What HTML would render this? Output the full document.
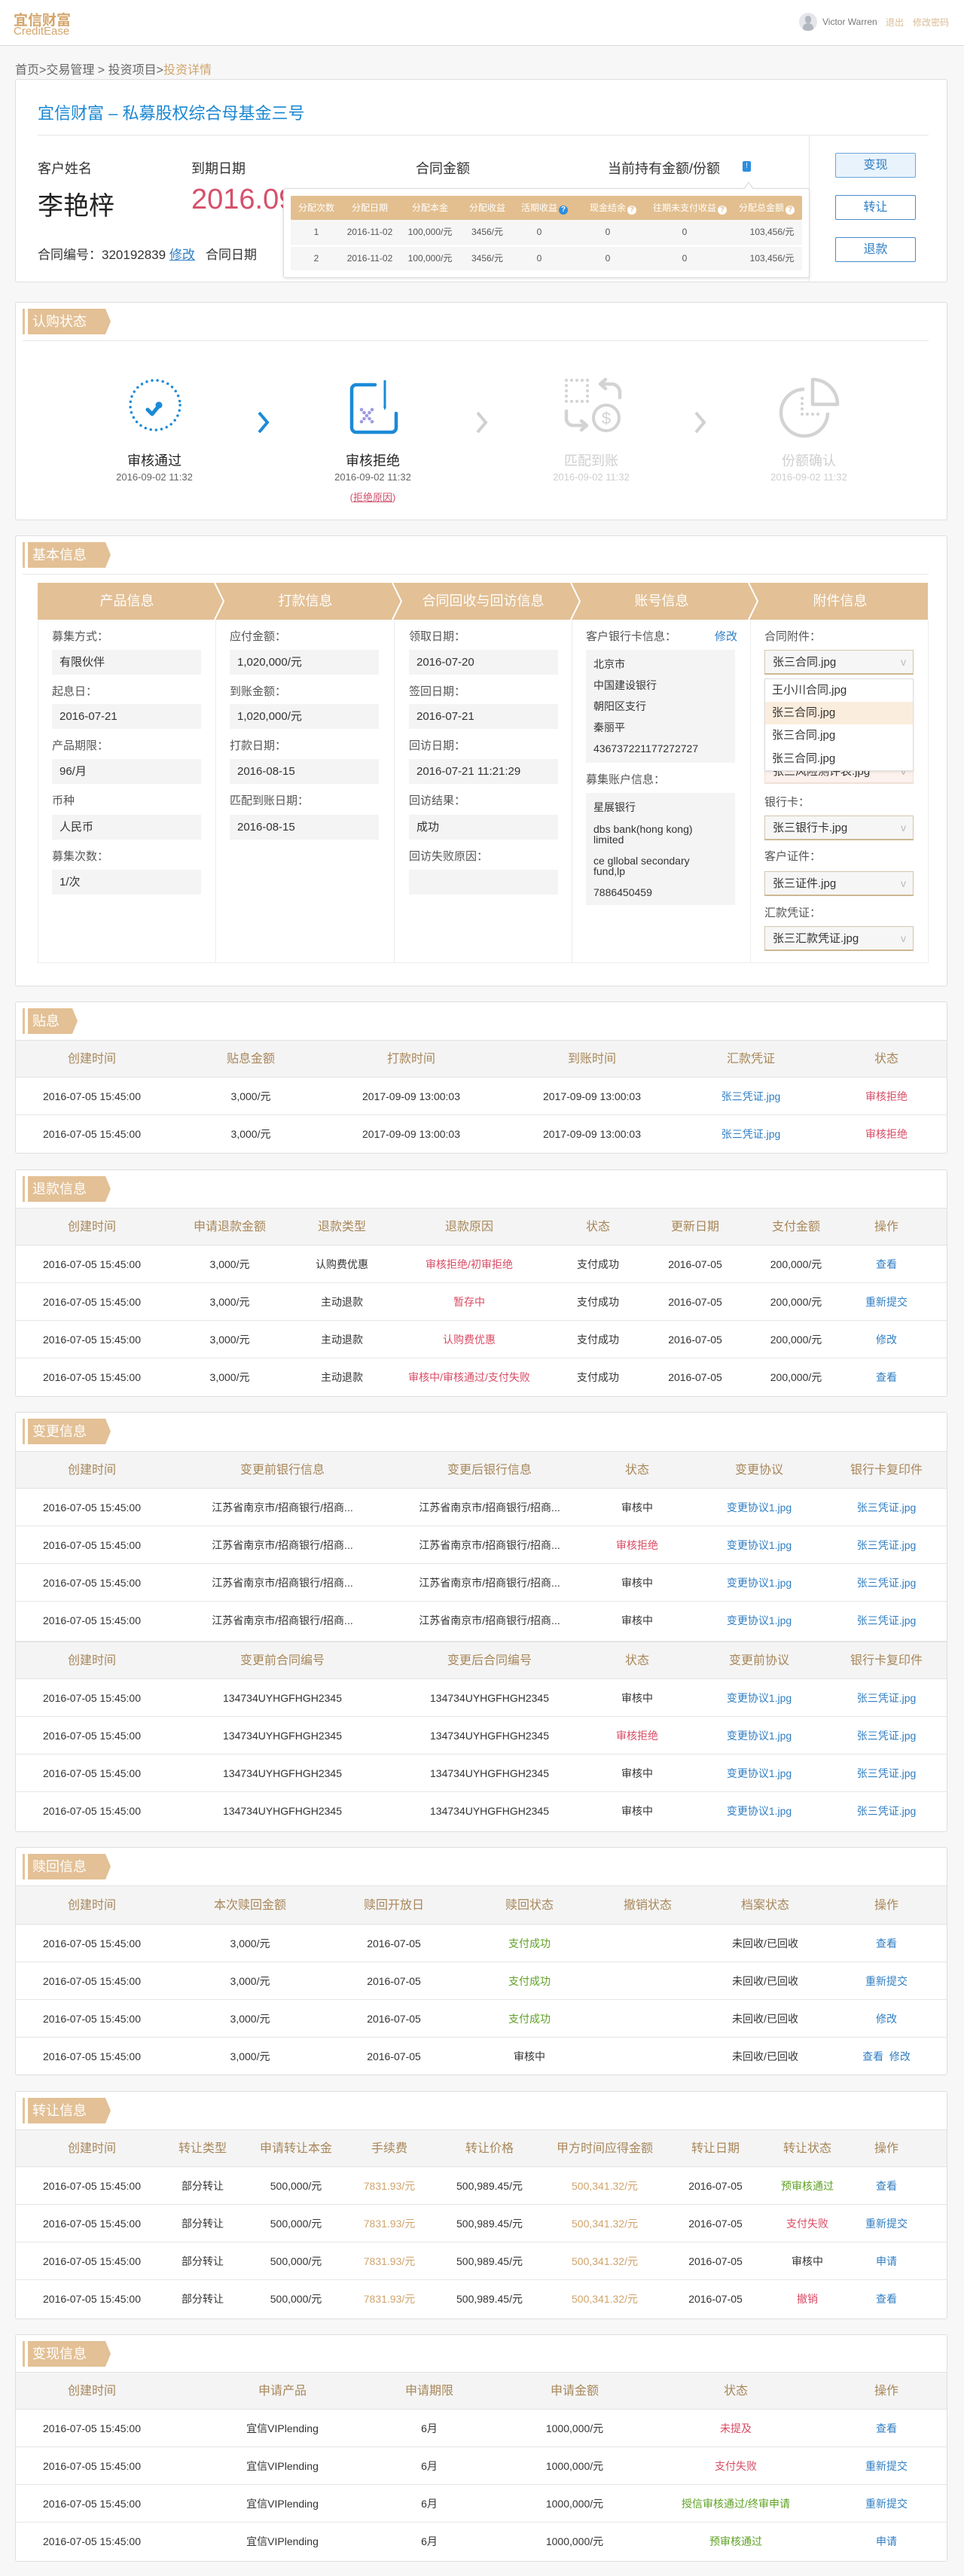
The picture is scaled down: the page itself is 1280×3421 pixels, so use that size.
<!DOCTYPE html>
<html><head><meta charset="utf-8">
<style>
*{margin:0;padding:0;box-sizing:border-box}
html,body{width:1280px;height:3421px;overflow:hidden}
body{background:#f7f7f7;font-family:"Liberation Sans","Noto Sans CJK SC",sans-serif;color:#333;position:relative}
.abs{position:absolute}
.hdr{position:absolute;left:0;top:0;width:1280px;height:61px;background:#fff;border-bottom:1px solid #d9d9d9}
.card{position:absolute;left:20px;width:1238px;background:#fff;border:1px solid #dedede;border-radius:3px;overflow:hidden}
.bar{position:absolute;left:9px;top:8px;width:3px;height:34px;background:#e3c49b}
.tag{position:absolute;left:16px;top:8px;height:34px;line-height:34px;background:#e3c095;color:#fff;font-size:18px;padding-left:6px;clip-path:polygon(0 0,calc(100% - 7px) 0,100% 50%,calc(100% - 7px) 100%,0 100%)}
.tr{position:relative;height:50px;border-bottom:1px solid #e6e6e6;font-size:14px;color:#333}
.tr span{position:absolute;top:0;line-height:50px;transform:translateX(-50%);white-space:nowrap}
.th{background:#f4f4f4;border-top:1px solid #e2e2e2;border-bottom:1px solid #e2e2e2;color:#a8875a;font-size:16px}
.tr.last{border-bottom:none}
.r{color:#d84b64}.b{color:#2f7ec3}.g{color:#5fa124}.t{color:#cfa46c}
.lbl{position:absolute;font-size:15px;color:#555;line-height:20px}
.box{position:absolute;background:#f4f4f4;height:33px;line-height:33px;font-size:15px;padding-left:10px;color:#333;width:198px}
.sel{position:absolute;height:33px;line-height:31px;font-size:15px;padding-left:10px;color:#333;width:198px;border:1px solid #d6c6ad;border-bottom:2px solid #cdb894;background:#f6f6f6}
.sel:after{content:"v";position:absolute;right:9px;top:0;color:#bbb;font-size:14px}
.col{position:absolute;top:111px;height:456px;width:237px;border-right:1px solid #ececec;border-bottom:1px solid #ececec}
.btn{position:absolute;left:1088px;width:107px;height:33px;border:1px solid #4a8bc9;border-radius:2px;color:#2f7ec3;font-size:16px;text-align:center;line-height:31px;background:#fff}
.pth{position:absolute;top:0;line-height:32px;color:#fff;font-size:12px;transform:translateX(-50%);white-space:nowrap}
.ptd{position:absolute;line-height:33px;color:#555;font-size:12px;transform:translateX(-50%);white-space:nowrap}
.q{display:inline-block;width:12px;height:12px;border-radius:6px;background:#fff;color:#e3bf8f;font-size:10px;line-height:12px;text-align:center;margin-left:2px;vertical-align:-1px;font-weight:bold}
</style></head><body>

<div class="hdr">
  <div class="abs" style="left:18px;top:12px;font-size:19px;font-weight:bold;color:#d4a56b;letter-spacing:0px">宜信财富</div>
  <div class="abs" style="left:18px;top:33px;font-size:15px;color:#d4a56b">CreditEase</div>
  <div class="abs" style="left:1061px;top:17px;width:24px;height:24px;border-radius:12px;background:#e4e6eb;overflow:hidden">
    <div class="abs" style="left:8px;top:4px;width:8px;height:10px;border-radius:4px;background:#b3b7bf"></div>
    <div class="abs" style="left:5px;top:14px;width:14px;height:12px;border-radius:6px 6px 0 0;background:#b3b7bf"></div>
  </div>
  <div class="abs" style="left:1092px;top:22px;font-size:12px;color:#777">Victor Warren</div>
  <div class="abs" style="left:1176px;top:21px;font-size:12px;color:#d9bb93">退出</div>
  <div class="abs" style="left:1212px;top:21px;font-size:12px;color:#d9bb93">修改密码</div>
</div>

<div class="abs" style="left:20px;top:79px;font-size:16px;color:#666">首页&gt;交易管理 &gt; 投资项目&gt;<span style="color:#cfa46c">投资详情</span></div>

<!-- top card -->
<div class="card" style="top:105px;height:270px;overflow:visible">
  <div class="abs" style="left:29px;top:27px;font-size:22px;color:#1a87d2">宜信财富 – 私募股权综合母基金三号</div>
  <div class="abs" style="left:29px;top:73px;width:1183px;height:1px;background:#e6e6e6"></div>
  <div class="abs" style="left:1053px;top:74px;width:1px;height:195px;background:#e6e6e6"></div>
  <div class="abs" style="left:29px;top:104px;font-size:18px">客户姓名</div>
  <div class="abs" style="left:233px;top:104px;font-size:18px">到期日期</div>
  <div class="abs" style="left:531px;top:104px;font-size:18px">合同金额</div>
  <div class="abs" style="left:786px;top:104px;font-size:18px">当前持有金额/份额</div>
  <div class="abs" style="left:965px;top:108px;width:11px;height:14px;background:#2c8ee0;border-radius:2px;color:#fff;font-size:10px;text-align:center;line-height:14px">!</div>
  <div class="abs" style="left:29px;top:140px;font-size:34px;color:#222">李艳梓</div>
  <div class="abs" style="left:233px;top:138px;font-size:38px;color:#d6506a">2016.09</div>
  <div class="abs" style="left:29px;top:218px;font-size:17px">合同编号：320192839 <span class="b" style="text-decoration:underline">修改</span>&nbsp;&nbsp; 合同日期</div>

  <div class="btn" style="top:97px;background:#e9f3fc;border-color:#6aa6db">变现</div>
  <div class="btn" style="top:153px">转让</div>
  <div class="btn" style="top:209px">退款</div>

  <!-- popup -->
  <div class="abs" style="left:355px;top:144px;width:699px;height:119px;background:#fff;border:1px solid #ddd;border-radius:3px;box-shadow:0 1px 4px rgba(0,0,0,.12)">
    <div class="abs" style="left:610px;top:-10px;width:0;height:0;border-left:7px solid transparent;border-right:7px solid transparent;border-bottom:10px solid #ddd"></div>
    <div class="abs" style="left:611px;top:-8px;width:0;height:0;border-left:6px solid transparent;border-right:6px solid transparent;border-bottom:9px solid #fff"></div>
    <div class="abs" style="left:9px;top:9px;width:679px;height:32px;background:#e3bf8f;border-radius:2px">
      <span class="pth" style="left:34px">分配次数</span>
      <span class="pth" style="left:105px">分配日期</span>
      <span class="pth" style="left:185px">分配本金</span>
      <span class="pth" style="left:261px">分配收益</span>
      <span class="pth" style="left:337px">活期收益<span class="q" style="background:#2c8ee0;color:#fff">?</span></span>
      <span class="pth" style="left:428px">现金结余<span class="q">?</span></span>
      <span class="pth" style="left:530px">往期未支付收益<span class="q">?</span></span>
      <span class="pth" style="left:632px">分配总金额<span class="q">?</span></span>
    </div>
    <div class="abs" style="left:9px;top:41px;width:679px;height:33px;background:#f6f6f6">
      <span class="ptd" style="left:34px">1</span><span class="ptd" style="left:105px">2016-11-02</span><span class="ptd" style="left:185px">100,000/元</span><span class="ptd" style="left:261px">3456/元</span><span class="ptd" style="left:330px">0</span><span class="ptd" style="left:421px">0</span><span class="ptd" style="left:523px">0</span><span class="ptd" style="left:639px">103,456/元</span>
    </div>
    <div class="abs" style="left:9px;top:77px;width:679px;height:31px;background:#f6f6f6">
      <span class="ptd" style="left:34px;line-height:31px">2</span><span class="ptd" style="left:105px;line-height:31px">2016-11-02</span><span class="ptd" style="left:185px;line-height:31px">100,000/元</span><span class="ptd" style="left:261px;line-height:31px">3456/元</span><span class="ptd" style="left:330px;line-height:31px">0</span><span class="ptd" style="left:421px;line-height:31px">0</span><span class="ptd" style="left:523px;line-height:31px">0</span><span class="ptd" style="left:639px;line-height:31px">103,456/元</span>
    </div>
  </div>
</div>

<!-- 认购状态 -->
<div class="card" style="top:401px;height:290px">
  <div class="bar"></div><div class="tag" style="width:110px">认购状态</div>
  <div class="abs" style="left:9px;top:50px;width:1203px;height:1px;background:#e6e6e6"></div>

  <svg class="abs" style="left:148px;top:99px" width="74" height="74" viewBox="0 0 74 74"><circle cx="37" cy="37" r="33" fill="none" stroke="#1b8ad8" stroke-width="3.5" stroke-linecap="round" stroke-dasharray="0 7.2"/><path d="M27 43 L33 49 L42 38" fill="none" stroke="#1b8ad8" stroke-width="5" stroke-linecap="round" stroke-linejoin="round"/><circle cx="42" cy="37" r="4.5" fill="#1b8ad8"/></svg>
  <svg class="abs" style="left:320px;top:143px" width="18" height="32"><polyline points="3,3 14,16 3,29" fill="none" stroke="#1b8ad8" stroke-width="4"/></svg>

  <svg class="abs" style="left:443px;top:100px" width="66" height="75" viewBox="0 0 66 75"><path d="M34 9 H9 a6 6 0 0 0 -6 6 V66 a6 6 0 0 0 6 6 H56 a6 6 0 0 0 6 -6 V47" fill="none" stroke="#1b8ad8" stroke-width="4.5" stroke-linecap="round"/><line x1="47" y1="3" x2="47" y2="38" stroke="#1b8ad8" stroke-width="3"/><path d="M45 38 L49 38 L47 43 Z" fill="#1b8ad8"/><g fill="#9d9be0"><circle cx="16" cy="42" r="2.3"/><circle cx="30" cy="42" r="2.3"/><circle cx="19.5" cy="46" r="2.3"/><circle cx="26.5" cy="46" r="2.3"/><circle cx="23" cy="50" r="2.3"/><circle cx="19.5" cy="54" r="2.3"/><circle cx="26.5" cy="54" r="2.3"/><circle cx="16" cy="58" r="2.3"/><circle cx="30" cy="58" r="2.3"/></g></svg>
  <svg class="abs" style="left:610px;top:143px" width="18" height="32"><polyline points="3,3 14,16 3,29" fill="none" stroke="#d0d0d0" stroke-width="4"/></svg>

  <svg class="abs" style="left:727px;top:99px" width="78" height="75" viewBox="0 0 78 75"><g fill="#d3d3d3"><circle cx="4" cy="4" r="2"/><circle cx="11" cy="4" r="2"/><circle cx="18" cy="4" r="2"/><circle cx="25" cy="4" r="2"/><circle cx="32" cy="4" r="2"/><circle cx="4" cy="11" r="2"/><circle cx="32" cy="11" r="2"/><circle cx="4" cy="18" r="2"/><circle cx="32" cy="18" r="2"/><circle cx="4" cy="25" r="2"/><circle cx="32" cy="25" r="2"/><circle cx="4" cy="32" r="2"/><circle cx="11" cy="32" r="2"/><circle cx="18" cy="32" r="2"/><circle cx="25" cy="32" r="2"/><circle cx="32" cy="32" r="2"/></g><path d="M75 27 V20 a11 11 0 0 0 -11 -11 H50 M56 3 L49 9 L56 15" fill="none" stroke="#d3d3d3" stroke-width="4.5" stroke-linecap="round" stroke-linejoin="round"/><path d="M4 45 V55 a9 9 0 0 0 9 9 H30 M24 58 L31 64 L24 70" fill="none" stroke="#d3d3d3" stroke-width="4.5" stroke-linecap="round" stroke-linejoin="round"/><circle cx="57" cy="54" r="17" fill="none" stroke="#d3d3d3" stroke-width="4"/><text x="57" y="62" text-anchor="middle" font-size="22" fill="#d3d3d3" font-family="Liberation Sans">$</text></svg>
  <svg class="abs" style="left:900px;top:143px" width="18" height="32"><polyline points="3,3 14,16 3,29" fill="none" stroke="#d0d0d0" stroke-width="4"/></svg>

  <svg class="abs" style="left:1013px;top:98px" width="82" height="82" viewBox="0 0 82 82"><path d="M34 17 A31 31 0 1 0 65 48" fill="none" stroke="#d3d3d3" stroke-width="4.5"/><path d="M45 4 V37 H78 A33 33 0 0 0 45 4 Z" fill="none" stroke="#d3d3d3" stroke-width="4.5" stroke-linejoin="round"/><g fill="#d3d3d3"><circle cx="31" cy="29" r="2"/><circle cx="31" cy="36" r="2"/><circle cx="31" cy="43" r="2"/><circle cx="31" cy="50" r="2"/><circle cx="38" cy="50" r="2"/><circle cx="45" cy="50" r="2"/><circle cx="52" cy="50" r="2"/></g></svg>

  <div class="abs" style="left:104px;top:196px;width:160px;text-align:center;font-size:18px;color:#222">审核通过</div>
  <div class="abs" style="left:104px;top:224px;width:160px;text-align:center;font-size:13px;color:#666">2016-09-02 11:32</div>
  <div class="abs" style="left:394px;top:196px;width:160px;text-align:center;font-size:18px;color:#222">审核拒绝</div>
  <div class="abs" style="left:394px;top:224px;width:160px;text-align:center;font-size:13px;color:#666">2016-09-02 11:32</div>
  <div class="abs" style="left:394px;top:248px;width:160px;text-align:center;font-size:13px;color:#d0506a">(<span style="text-decoration:underline">拒绝原因</span>)</div>
  <div class="abs" style="left:684px;top:196px;width:160px;text-align:center;font-size:18px;color:#cfcfcf">匹配到账</div>
  <div class="abs" style="left:684px;top:224px;width:160px;text-align:center;font-size:13px;color:#cfcfcf">2016-09-02 11:32</div>
  <div class="abs" style="left:973px;top:196px;width:160px;text-align:center;font-size:18px;color:#cfcfcf">份额确认</div>
  <div class="abs" style="left:973px;top:224px;width:160px;text-align:center;font-size:13px;color:#cfcfcf">2016-09-02 11:32</div>
</div>

<!-- 基本信息 -->
<div class="card" style="top:711px;height:599px">
  <div class="bar"></div><div class="tag" style="width:110px">基本信息</div>
  <div class="abs" style="left:9px;top:50px;width:1203px;height:1px;background:#e6e6e6"></div>
  <div class="abs" style="left:29px;top:62px;width:1182px;height:49px;background:#e3c095"></div>
  <svg class="abs" style="left:29px;top:62px" width="1182" height="49"><g fill="none" stroke="#fff" stroke-width="2"><polyline points="235,0 247,24.5 235,49"/><polyline points="471,0 483,24.5 471,49"/><polyline points="708,0 720,24.5 708,49"/><polyline points="944,0 956,24.5 944,49"/></g></svg>
  <div class="abs" style="left:29px;top:62px;width:237px;line-height:49px;text-align:center;color:#fff;font-size:18px">产品信息</div>
  <div class="abs" style="left:266px;top:62px;width:237px;line-height:49px;text-align:center;color:#fff;font-size:18px">打款信息</div>
  <div class="abs" style="left:502px;top:62px;width:237px;line-height:49px;text-align:center;color:#fff;font-size:18px">合同回收与回访信息</div>
  <div class="abs" style="left:739px;top:62px;width:237px;line-height:49px;text-align:center;color:#fff;font-size:18px">账号信息</div>
  <div class="abs" style="left:976px;top:62px;width:237px;line-height:49px;text-align:center;color:#fff;font-size:18px">附件信息</div>

  <div class="col" style="left:29px;border-left:1px solid #ececec">
    <div class="lbl" style="left:18px;top:13px">募集方式：</div><div class="box" style="left:18px;top:40px">有限伙伴</div>
    <div class="lbl" style="left:18px;top:86px">起息日：</div><div class="box" style="left:18px;top:112px">2016-07-21</div>
    <div class="lbl" style="left:18px;top:158px">产品期限：</div><div class="box" style="left:18px;top:185px">96/月</div>
    <div class="lbl" style="left:18px;top:231px">币种</div><div class="box" style="left:18px;top:259px">人民币</div>
    <div class="lbl" style="left:18px;top:305px">募集次数：</div><div class="box" style="left:18px;top:332px">1/次</div>
  </div>
  <div class="col" style="left:266px">
    <div class="lbl" style="left:18px;top:13px">应付金额：</div><div class="box" style="left:18px;top:40px">1,020,000/元</div>
    <div class="lbl" style="left:18px;top:86px">到账金额：</div><div class="box" style="left:18px;top:112px">1,020,000/元</div>
    <div class="lbl" style="left:18px;top:158px">打款日期：</div><div class="box" style="left:18px;top:185px">2016-08-15</div>
    <div class="lbl" style="left:18px;top:231px">匹配到账日期：</div><div class="box" style="left:18px;top:259px">2016-08-15</div>
  </div>
  <div class="col" style="left:502px">
    <div class="lbl" style="left:20px;top:13px">领取日期：</div><div class="box" style="left:20px;top:40px">2016-07-20</div>
    <div class="lbl" style="left:20px;top:86px">签回日期：</div><div class="box" style="left:20px;top:112px">2016-07-21</div>
    <div class="lbl" style="left:20px;top:158px">回访日期：</div><div class="box" style="left:20px;top:185px">2016-07-21 11:21:29</div>
    <div class="lbl" style="left:20px;top:231px">回访结果：</div><div class="box" style="left:20px;top:259px">成功</div>
    <div class="lbl" style="left:20px;top:305px">回访失败原因：</div><div class="box" style="left:20px;top:332px"></div>
  </div>
  <div class="col" style="left:739px">
    <div class="lbl" style="left:18px;top:13px">客户银行卡信息：</div><div class="lbl b" style="left:189px;top:13px;color:#2f7ec3">修改</div>
    <div class="box" style="left:18px;top:40px;height:150px;line-height:28px;padding-top:5px;font-size:14px">北京市<br>中国建设银行<br>朝阳区支行<br>秦丽平<br>436737221177272727</div>
    <div class="lbl" style="left:18px;top:203px">募集账户信息：</div>
    <div class="box" style="left:18px;top:230px;height:149px;font-size:14px;line-height:14px;padding-top:12px">星展银行<div style="height:15px"></div>dbs bank(hong kong)<br>limited<div style="height:14px"></div>ce gllobal secondary<br>fund,lp<div style="height:14px"></div>7886450459</div>
  </div>
  <div class="col" style="left:976px;width:236px">
    <div class="lbl" style="left:18px;top:13px">合同附件：</div><div class="sel" style="left:18px;top:40px">张三合同.jpg</div>
    <div class="sel" style="left:18px;top:185px;background:#fcf1ec;border-color:#f0e0d6">张三风险测评表.jpg</div>
    <div class="abs" style="left:18px;top:78px;width:198px;height:123px;background:#fff;border:1px solid #ddd;box-shadow:0 1px 3px rgba(0,0,0,.1);font-size:15px">
      <div style="height:30px;line-height:30px;padding-left:9px">王小川合同.jpg</div>
      <div style="height:30px;line-height:30px;padding-left:9px;background:#fbeddd">张三合同.jpg</div>
      <div style="height:30px;line-height:30px;padding-left:9px">张三合同.jpg</div>
      <div style="height:31px;line-height:31px;padding-left:9px">张三合同.jpg</div>
    </div>
    <div class="lbl" style="left:18px;top:233px">银行卡：</div><div class="sel" style="left:18px;top:260px">张三银行卡.jpg</div>
    <div class="lbl" style="left:18px;top:305px">客户证件：</div><div class="sel" style="left:18px;top:334px">张三证件.jpg</div>
    <div class="lbl" style="left:18px;top:380px">汇款凭证：</div><div class="sel" style="left:18px;top:407px">张三汇款凭证.jpg</div>
  </div>
</div>

<!-- 贴息 -->
<div class="card" style="top:1330px;height:202px">
  <div class="bar"></div><div class="tag" style="width:66px">贴息</div>
  <div style="height:50px"></div>
  <div class="tr th"><span style="left:101px">创建时间</span><span style="left:312px">贴息金额</span><span style="left:525px">打款时间</span><span style="left:765px">到账时间</span><span style="left:976px">汇款凭证</span><span style="left:1156px">状态</span></div>
  <div class="tr"><span style="left:101px">2016-07-05 15:45:00</span><span style="left:312px">3,000/元</span><span style="left:525px">2017-09-09 13:00:03</span><span style="left:765px">2017-09-09 13:00:03</span><span class="b" style="left:976px">张三凭证.jpg</span><span class="r" style="left:1156px">审核拒绝</span></div>
  <div class="tr last"><span style="left:101px">2016-07-05 15:45:00</span><span style="left:312px">3,000/元</span><span style="left:525px">2017-09-09 13:00:03</span><span style="left:765px">2017-09-09 13:00:03</span><span class="b" style="left:976px">张三凭证.jpg</span><span class="r" style="left:1156px">审核拒绝</span></div>
</div>

<!-- 退款 -->
<div class="card" style="top:1553px;height:302px">
  <div class="bar"></div><div class="tag" style="width:110px">退款信息</div>
  <div style="height:50px"></div>
  <div class="tr th"><span style="left:101px">创建时间</span><span style="left:284px">申请退款金额</span><span style="left:433px">退款类型</span><span style="left:602px">退款原因</span><span style="left:773px">状态</span><span style="left:902px">更新日期</span><span style="left:1036px">支付金额</span><span style="left:1156px">操作</span></div>
  <div class="tr"><span style="left:101px">2016-07-05 15:45:00</span><span style="left:284px">3,000/元</span><span style="left:433px">认购费优惠</span><span class="r" style="left:602px">审核拒绝/初审拒绝</span><span style="left:773px">支付成功</span><span style="left:902px">2016-07-05</span><span style="left:1036px">200,000/元</span><span class="b" style="left:1156px">查看</span></div>
  <div class="tr"><span style="left:101px">2016-07-05 15:45:00</span><span style="left:284px">3,000/元</span><span style="left:433px">主动退款</span><span class="r" style="left:602px">暂存中</span><span style="left:773px">支付成功</span><span style="left:902px">2016-07-05</span><span style="left:1036px">200,000/元</span><span class="b" style="left:1156px">重新提交</span></div>
  <div class="tr"><span style="left:101px">2016-07-05 15:45:00</span><span style="left:284px">3,000/元</span><span style="left:433px">主动退款</span><span class="r" style="left:602px">认购费优惠</span><span style="left:773px">支付成功</span><span style="left:902px">2016-07-05</span><span style="left:1036px">200,000/元</span><span class="b" style="left:1156px">修改</span></div>
  <div class="tr last"><span style="left:101px">2016-07-05 15:45:00</span><span style="left:284px">3,000/元</span><span style="left:433px">主动退款</span><span class="r" style="left:602px">审核中/审核通过/支付失败</span><span style="left:773px">支付成功</span><span style="left:902px">2016-07-05</span><span style="left:1036px">200,000/元</span><span class="b" style="left:1156px">查看</span></div>
</div>

<!-- 变更 -->
<div class="card" style="top:1875px;height:558px">
  <div class="bar"></div><div class="tag" style="width:110px">变更信息</div>
  <div style="height:51px"></div>
  <div class="tr th"><span style="left:101px">创建时间</span><span style="left:354px">变更前银行信息</span><span style="left:629px">变更后银行信息</span><span style="left:825px">状态</span><span style="left:987px">变更协议</span><span style="left:1156px">银行卡复印件</span></div>
  <div class="tr"><span style="left:101px">2016-07-05 15:45:00</span><span style="left:354px">江苏省南京市/招商银行/招商...</span><span style="left:629px">江苏省南京市/招商银行/招商...</span><span style="left:825px">审核中</span><span class="b" style="left:987px">变更协议1.jpg</span><span class="b" style="left:1156px">张三凭证.jpg</span></div>
  <div class="tr"><span style="left:101px">2016-07-05 15:45:00</span><span style="left:354px">江苏省南京市/招商银行/招商...</span><span style="left:629px">江苏省南京市/招商银行/招商...</span><span class="r" style="left:825px">审核拒绝</span><span class="b" style="left:987px">变更协议1.jpg</span><span class="b" style="left:1156px">张三凭证.jpg</span></div>
  <div class="tr"><span style="left:101px">2016-07-05 15:45:00</span><span style="left:354px">江苏省南京市/招商银行/招商...</span><span style="left:629px">江苏省南京市/招商银行/招商...</span><span style="left:825px">审核中</span><span class="b" style="left:987px">变更协议1.jpg</span><span class="b" style="left:1156px">张三凭证.jpg</span></div>
  <div class="tr" style="height:53px"><span style="left:101px">2016-07-05 15:45:00</span><span style="left:354px">江苏省南京市/招商银行/招商...</span><span style="left:629px">江苏省南京市/招商银行/招商...</span><span style="left:825px">审核中</span><span class="b" style="left:987px">变更协议1.jpg</span><span class="b" style="left:1156px">张三凭证.jpg</span></div>
  <div class="tr th"><span style="left:101px">创建时间</span><span style="left:354px">变更前合同编号</span><span style="left:629px">变更后合同编号</span><span style="left:825px">状态</span><span style="left:987px">变更前协议</span><span style="left:1156px">银行卡复印件</span></div>
  <div class="tr"><span style="left:101px">2016-07-05 15:45:00</span><span style="left:354px">134734UYHGFHGH2345</span><span style="left:629px">134734UYHGFHGH2345</span><span style="left:825px">审核中</span><span class="b" style="left:987px">变更协议1.jpg</span><span class="b" style="left:1156px">张三凭证.jpg</span></div>
  <div class="tr"><span style="left:101px">2016-07-05 15:45:00</span><span style="left:354px">134734UYHGFHGH2345</span><span style="left:629px">134734UYHGFHGH2345</span><span class="r" style="left:825px">审核拒绝</span><span class="b" style="left:987px">变更协议1.jpg</span><span class="b" style="left:1156px">张三凭证.jpg</span></div>
  <div class="tr"><span style="left:101px">2016-07-05 15:45:00</span><span style="left:354px">134734UYHGFHGH2345</span><span style="left:629px">134734UYHGFHGH2345</span><span style="left:825px">审核中</span><span class="b" style="left:987px">变更协议1.jpg</span><span class="b" style="left:1156px">张三凭证.jpg</span></div>
  <div class="tr last"><span style="left:101px">2016-07-05 15:45:00</span><span style="left:354px">134734UYHGFHGH2345</span><span style="left:629px">134734UYHGFHGH2345</span><span style="left:825px">审核中</span><span class="b" style="left:987px">变更协议1.jpg</span><span class="b" style="left:1156px">张三凭证.jpg</span></div>
</div>

<!-- 赎回 -->
<div class="card" style="top:2453px;height:303px">
  <div class="bar"></div><div class="tag" style="width:110px">赎回信息</div>
  <div style="height:50px"></div>
  <div class="tr th" style="height:52px"><span style="left:101px;line-height:52px">创建时间</span><span style="left:311px;line-height:52px">本次赎回金额</span><span style="left:502px;line-height:52px">赎回开放日</span><span style="left:682px;line-height:52px">赎回状态</span><span style="left:839px;line-height:52px">撤销状态</span><span style="left:995px;line-height:52px">档案状态</span><span style="left:1156px;line-height:52px">操作</span></div>
  <div class="tr"><span style="left:101px">2016-07-05 15:45:00</span><span style="left:311px">3,000/元</span><span style="left:502px">2016-07-05</span><span class="g" style="left:682px">支付成功</span><span style="left:995px">未回收/已回收</span><span class="b" style="left:1156px">查看</span></div>
  <div class="tr"><span style="left:101px">2016-07-05 15:45:00</span><span style="left:311px">3,000/元</span><span style="left:502px">2016-07-05</span><span class="g" style="left:682px">支付成功</span><span style="left:995px">未回收/已回收</span><span class="b" style="left:1156px">重新提交</span></div>
  <div class="tr"><span style="left:101px">2016-07-05 15:45:00</span><span style="left:311px">3,000/元</span><span style="left:502px">2016-07-05</span><span class="g" style="left:682px">支付成功</span><span style="left:995px">未回收/已回收</span><span class="b" style="left:1156px">修改</span></div>
  <div class="tr last"><span style="left:101px">2016-07-05 15:45:00</span><span style="left:311px">3,000/元</span><span style="left:502px">2016-07-05</span><span style="left:682px">审核中</span><span style="left:995px">未回收/已回收</span><span class="b" style="left:1156px">查看&nbsp;&nbsp;修改</span></div>
</div>

<!-- 转让 -->
<div class="card" style="top:2777px;height:303px">
  <div class="bar"></div><div class="tag" style="width:110px">转让信息</div>
  <div style="height:50px"></div>
  <div class="tr th"><span style="left:101px">创建时间</span><span style="left:248px">转让类型</span><span style="left:372px">申请转让本金</span><span style="left:496px">手续费</span><span style="left:629px">转让价格</span><span style="left:782px">甲方时间应得金额</span><span style="left:929px">转让日期</span><span style="left:1051px">转让状态</span><span style="left:1156px">操作</span></div>
  <div class="tr"><span style="left:101px">2016-07-05 15:45:00</span><span style="left:248px">部分转让</span><span style="left:372px">500,000/元</span><span class="t" style="left:496px">7831.93/元</span><span style="left:629px">500,989.45/元</span><span class="t" style="left:782px">500,341.32/元</span><span style="left:929px">2016-07-05</span><span class="g" style="left:1051px">预审核通过</span><span class="b" style="left:1156px">查看</span></div>
  <div class="tr"><span style="left:101px">2016-07-05 15:45:00</span><span style="left:248px">部分转让</span><span style="left:372px">500,000/元</span><span class="t" style="left:496px">7831.93/元</span><span style="left:629px">500,989.45/元</span><span class="t" style="left:782px">500,341.32/元</span><span style="left:929px">2016-07-05</span><span class="r" style="left:1051px">支付失败</span><span class="b" style="left:1156px">重新提交</span></div>
  <div class="tr"><span style="left:101px">2016-07-05 15:45:00</span><span style="left:248px">部分转让</span><span style="left:372px">500,000/元</span><span class="t" style="left:496px">7831.93/元</span><span style="left:629px">500,989.45/元</span><span class="t" style="left:782px">500,341.32/元</span><span style="left:929px">2016-07-05</span><span style="left:1051px">审核中</span><span class="b" style="left:1156px">申请</span></div>
  <div class="tr last"><span style="left:101px">2016-07-05 15:45:00</span><span style="left:248px">部分转让</span><span style="left:372px">500,000/元</span><span class="t" style="left:496px">7831.93/元</span><span style="left:629px">500,989.45/元</span><span class="t" style="left:782px">500,341.32/元</span><span style="left:929px">2016-07-05</span><span class="r" style="left:1051px">撤销</span><span class="b" style="left:1156px">查看</span></div>
</div>

<!-- 变现 -->
<div class="card" style="top:3100px;height:302px">
  <div class="bar"></div><div class="tag" style="width:110px">变现信息</div>
  <div style="height:49px"></div>
  <div class="tr th"><span style="left:101px">创建时间</span><span style="left:354px">申请产品</span><span style="left:549px">申请期限</span><span style="left:742px">申请金额</span><span style="left:956px">状态</span><span style="left:1156px">操作</span></div>
  <div class="tr"><span style="left:101px">2016-07-05 15:45:00</span><span style="left:354px">宜信VIPlending</span><span style="left:549px">6月</span><span style="left:742px">1000,000/元</span><span class="r" style="left:956px">未提及</span><span class="b" style="left:1156px">查看</span></div>
  <div class="tr"><span style="left:101px">2016-07-05 15:45:00</span><span style="left:354px">宜信VIPlending</span><span style="left:549px">6月</span><span style="left:742px">1000,000/元</span><span class="r" style="left:956px">支付失败</span><span class="b" style="left:1156px">重新提交</span></div>
  <div class="tr"><span style="left:101px">2016-07-05 15:45:00</span><span style="left:354px">宜信VIPlending</span><span style="left:549px">6月</span><span style="left:742px">1000,000/元</span><span class="g" style="left:956px">授信审核通过/终审申请</span><span class="b" style="left:1156px">重新提交</span></div>
  <div class="tr last"><span style="left:101px">2016-07-05 15:45:00</span><span style="left:354px">宜信VIPlending</span><span style="left:549px">6月</span><span style="left:742px">1000,000/元</span><span class="g" style="left:956px">预审核通过</span><span class="b" style="left:1156px">申请</span></div>
</div>

</body></html>
